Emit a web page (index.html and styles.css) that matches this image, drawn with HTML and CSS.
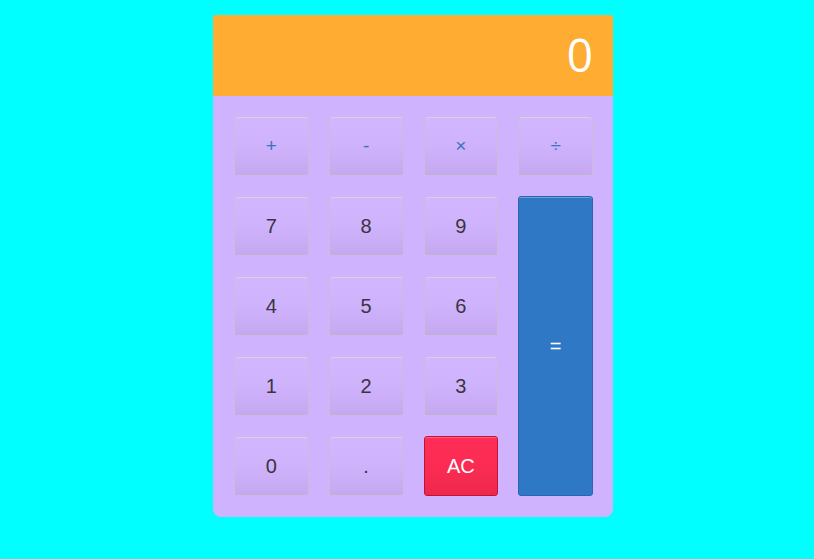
FILE: index.html
```html
<!DOCTYPE html>
<html lang="en">
<head>
<meta charset="utf-8">
<title>Calculator</title>
<link rel="stylesheet" href="styles.css">
</head>
<body>
<div class="calculator">
  <div class="display">0</div>
  <div class="keys">
    <button class="key op">+</button>
    <button class="key op">-</button>
    <button class="key op">×</button>
    <button class="key op">÷</button>
    <button class="key">7</button>
    <button class="key">8</button>
    <button class="key">9</button>
    <button class="key equal">=</button>
    <button class="key">4</button>
    <button class="key">5</button>
    <button class="key">6</button>
    <button class="key">1</button>
    <button class="key">2</button>
    <button class="key">3</button>
    <button class="key">0</button>
    <button class="key">.</button>
    <button class="key clear">AC</button>
  </div>
</div>
</body>
</html>
```
FILE: styles.css
```css
html, body {
  margin: 0;
  padding: 0;
  background: #00ffff;
  height: 100%;
}
body {
  padding: 15px 0 0 12px;
  box-sizing: border-box;
  font-family: "Liberation Sans", Arial, sans-serif;
}
.calculator {
  width: 400px;
  margin: 0 auto;
  background: #cfb3ff;
  border-radius: 3px 3px 8px 8px;
  overflow: hidden;
}
.display {
  height: 81px;
  background: #ffac33;
  color: #fff;
  font-family: "Open Sans", sans-serif;
  font-weight: 400;
  font-size: 46px;
  text-align: right;
  line-height: 79px;
  padding: 0 20px;
}
.keys {
  display: grid;
  grid-template-columns: repeat(4, 1fr);
  grid-auto-rows: 60px;
  column-gap: 20px;
  row-gap: 20px;
  padding: 20px 20px 21px 21px;
}
.key {
  margin: 0;
  font-family: "Liberation Sans", Arial, sans-serif;
  font-size: 20px;
  color: #3a3540;
  background: linear-gradient(to bottom, #d2b6ff 0%, #cfb3fc 45%, #c5a8f0 100%);
  border: 1px solid #c7c0d2;
  border-radius: 3px;
  box-shadow: inset 0 1px 0 rgba(255, 255, 255, 0.25);
  padding: 0;
}
.op {
  color: #3d72c2;
  font-size: 19px;
}
.equal {
  grid-column: 4;
  grid-row: 2 / span 4;
  background: #2e78c5;
  border-color: #2966ad;
  color: #fff;
  box-shadow: inset 0 1px 0 rgba(255, 255, 255, 0.3);
}
.clear {
  background: linear-gradient(to bottom, #ff2d57 0%, #fb2c53 50%, #ee284c 100%);
  border-color: #c2123a;
  color: #fff;
}
```
